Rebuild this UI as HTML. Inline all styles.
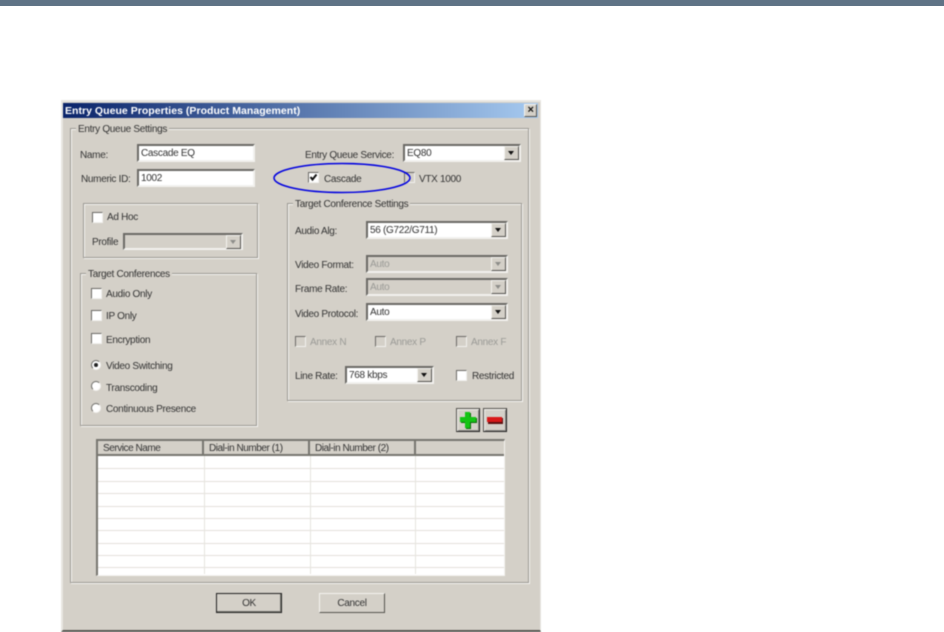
<!DOCTYPE html>
<html><head><meta charset="utf-8"><style>
html,body{margin:0;padding:0;background:#fff;width:944px;height:632px;overflow:hidden}
*{box-sizing:border-box}
#bar{position:absolute;left:0;top:0;width:944px;height:6px;background:#5f7386}
#w{position:absolute;left:0;top:0;width:944px;height:632px;filter:blur(.4px);font:10px "Liberation Sans",sans-serif;color:#333;letter-spacing:-.3px}
#w div{position:absolute}
.t{height:16px;line-height:16px;white-space:nowrap}
.g{color:#9a9a96}
.grp{border:1px solid #9b9993;box-shadow:1px 1px 0 #f6f5f2,inset 1px 1px 0 #f6f5f2}
.lg{background:#d4d0c8;padding:0 2px}
.in{background:#fff;border:2px solid;border-color:#6b6a66 #f2f1ee #f2f1ee #6b6a66;padding-left:2px;line-height:15px;color:#333}
.dis{background:#d4d0c8;color:#9a9a96}
.ar{right:0;top:0;width:15px;height:14px;background:#d4d0c8;border:1px solid;border-color:#f4f3f0 #55544f #55544f #f4f3f0}
.ar:after{content:"";position:absolute;left:3px;top:4px;border:3.5px solid transparent;border-top:4px solid #111;border-bottom:0}
.dis .ar:after{border-top-color:#8e8e8a}
.cb{width:11px;height:11px;background:#fff;border:1px solid;border-color:#6b6a66 #f2f1ee #f2f1ee #6b6a66}
.cbd{background:#d4d0c8}
.rd{width:10px;height:10px;border-radius:50%;background:#fff;border:1px solid;border-color:#6b6a66 #f4f3f0 #f4f3f0 #6b6a66}
.btn{background:#d4d0c8;text-align:center;line-height:20px;height:20px;width:66px;top:593px;border:1px solid;border-color:#f4f3f0 #55544f #55544f #f4f3f0}
.r{left:98px;width:406px;height:1px;background:#e3e1db}
.c{top:456px;width:1px;height:118px;background:#e6e4de}
.h{top:440px;height:15px;line-height:17px;padding-left:5px;border-right:2px solid #77766f;white-space:nowrap;letter-spacing:-.45px}
.tb{width:24px;height:24px;top:408px;background:#d4d0c8;border:1px solid;border-color:#55544f #222 #222 #55544f;box-shadow:inset 1px 1px 0 #f4f3f0,inset -1px -1px 0 #8f8d88}
</style></head><body>
<div id="bar"></div>
<div id="w">
<div style="left:61px;top:100px;width:480px;height:532px;background:#d4d0c8;border-top:2px solid #e8e6e1;border-left:2px solid #e8e6e1;border-right:1px solid #e8e6e1;border-bottom:2px solid #55544f"></div>
<div style="left:63px;top:103px;width:475px;height:15px;background:linear-gradient(90deg,#0a246a,#a6caf0)"></div>
<div class="t" style="left:65px;top:103px;font-weight:bold;color:#fff;font-size:10.5px;letter-spacing:.03px">Entry Queue Properties (Product Management)</div>
<div style="left:524px;top:104px;width:13px;height:13px;background:#d4d0c8;border:1px solid;border-color:#f4f3f0 #55544f #55544f #f4f3f0;font:bold 11px/10px 'Liberation Sans';text-align:center;color:#111">×</div>

<div class="grp" style="left:70px;top:128px;width:459px;height:455px"></div>
<div class="lg t" style="left:76px;top:122px;height:14px">Entry Queue Settings</div>

<div class="t" style="left:80px;top:148px">Name:</div>
<div class="in" style="left:137px;top:144px;width:118px;height:18px">Cascade EQ</div>
<div class="t" style="left:81px;top:172px">Numeric ID:</div>
<div class="in" style="left:137px;top:169px;width:118px;height:18px">1002</div>

<div class="t" style="left:305px;top:148px">Entry Queue Service:</div>
<div class="in" style="left:403px;top:144px;width:118px;height:18px">EQ80<div class="ar"></div></div>
<div class="cb" style="left:308px;top:172px"></div>
<div class="t" style="left:324px;top:172px">Cascade</div>
<div class="cb cbd" style="left:404px;top:172px"></div>
<div class="t" style="left:419px;top:172px">VTX 1000</div>

<div class="grp" style="left:83px;top:203px;width:175px;height:55px"></div>
<div class="cb" style="left:92px;top:212px"></div>
<div class="t" style="left:107px;top:210px">Ad Hoc</div>
<div class="t" style="left:92px;top:235px">Profile</div>
<div class="in dis" style="left:123px;top:233px;width:120px;height:17px"><div class="ar"></div></div>

<div class="grp" style="left:80px;top:273px;width:177px;height:153px"></div>
<div class="lg t" style="left:86px;top:267px;height:14px">Target Conferences</div>
<div class="cb" style="left:91px;top:288px"></div><div class="t" style="left:106px;top:287px">Audio Only</div>
<div class="cb" style="left:91px;top:310px"></div><div class="t" style="left:106px;top:309px">IP Only</div>
<div class="cb" style="left:91px;top:333px"></div><div class="t" style="left:106px;top:333px">Encryption</div>
<div class="rd" style="left:91px;top:360px"></div><div style="left:94px;top:363px;width:4px;height:4px;border-radius:50%;background:#222"></div>
<div class="t" style="left:106px;top:359px">Video Switching</div>
<div class="rd" style="left:91px;top:381px"></div><div class="t" style="left:106px;top:381px">Transcoding</div>
<div class="rd" style="left:91px;top:403px"></div><div class="t" style="left:106px;top:402px">Continuous Presence</div>

<div class="grp" style="left:287px;top:203px;width:235px;height:198px"></div>
<div class="lg t" style="left:293px;top:197px;height:14px">Target Conference Settings</div>
<div class="t" style="left:295px;top:224px">Audio Alg:</div>
<div class="in" style="left:366px;top:221px;width:142px;height:18px">56 (G722/G711)<div class="ar"></div></div>
<div class="t" style="left:295px;top:258px">Video Format:</div>
<div class="in dis" style="left:366px;top:255px;width:142px;height:18px">Auto<div class="ar"></div></div>
<div class="t" style="left:295px;top:282px">Frame Rate:</div>
<div class="in dis" style="left:366px;top:278px;width:142px;height:18px">Auto<div class="ar"></div></div>
<div class="t" style="left:295px;top:307px">Video Protocol:</div>
<div class="in" style="left:366px;top:303px;width:142px;height:18px">Auto<div class="ar"></div></div>
<div class="cb cbd" style="left:295px;top:336px"></div><div class="t g" style="left:310px;top:335px">Annex N</div>
<div class="cb cbd" style="left:375px;top:336px"></div><div class="t g" style="left:390px;top:335px">Annex P</div>
<div class="cb cbd" style="left:456px;top:336px"></div><div class="t g" style="left:471px;top:335px">Annex F</div>
<div class="t" style="left:295px;top:369px">Line Rate:</div>
<div class="in" style="left:345px;top:366px;width:89px;height:18px">768 kbps<div class="ar"></div></div>
<div class="cb" style="left:456px;top:370px"></div><div class="t" style="left:472px;top:369px">Restricted</div>

<div class="tb" style="left:456px"></div>
<div style="left:466px;top:413px;width:5px;height:16px;background:#0a6a0a"></div>
<div style="left:461px;top:418px;width:16px;height:5px;background:#0a6a0a"></div>
<div style="left:465px;top:412px;width:5px;height:16px;background:#14c414"></div>
<div style="left:460px;top:417px;width:16px;height:5px;background:#14c414"></div>
<div class="tb" style="left:483px"></div>
<div style="left:488px;top:418px;width:15px;height:6px;background:#5a1010"></div>
<div style="left:487px;top:417px;width:15px;height:5px;background:#d81818"></div>

<div style="left:96px;top:439px;width:409px;height:137px;background:#fff;border:1px solid;border-width:2px 1px 1px 2px;border-color:#77766f #f4f3f0 #f4f3f0 #77766f"></div>
<div style="left:98px;top:441px;width:406px;height:15px;background:#d4d0c8;border-bottom:2px solid #77766f"></div>
<div class="h" style="left:98px;width:106px">Service Name</div>
<div class="h" style="left:204px;width:106px">Dial-in Number (1)</div>
<div class="h" style="left:310px;width:106px">Dial-in Number (2)</div>
<div class="r" style="top:468px"></div><div class="r" style="top:481px"></div><div class="r" style="top:493px"></div>
<div class="r" style="top:506px"></div><div class="r" style="top:518px"></div><div class="r" style="top:530px"></div>
<div class="r" style="top:543px"></div><div class="r" style="top:555px"></div><div class="r" style="top:567px"></div>
<div class="c" style="left:204px"></div><div class="c" style="left:310px"></div><div class="c" style="left:415px"></div>

<div class="btn" style="left:216px;border:1px solid #222;box-shadow:inset -1px -1px 0 #77766f">OK</div>
<div class="btn" style="left:319px">Cancel</div>

<svg style="position:absolute;left:0;top:0" width="944" height="632"><path d="M310.5 177 L312.5 179.5 L316.5 174.5" fill="none" stroke="#111" stroke-width="2"/><ellipse cx="342" cy="178" rx="68" ry="14.5" fill="none" stroke="#0000e0" stroke-width="1.5"/></svg>
</div>
</body></html>
